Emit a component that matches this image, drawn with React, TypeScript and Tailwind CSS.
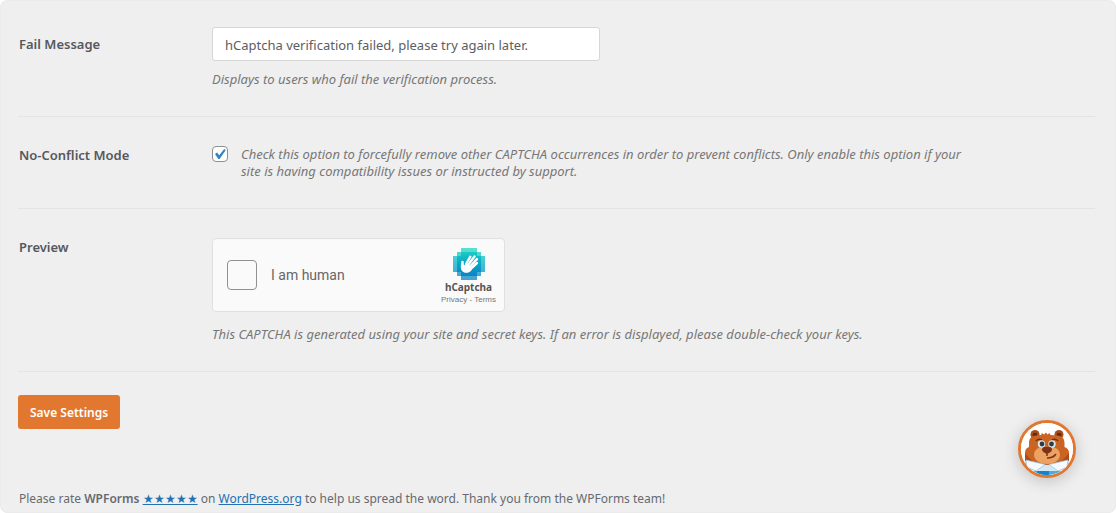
import type { ReactNode } from 'react';

const FONT = "font-['Noto_Sans','Open_Sans',sans-serif]";

function SettingRow({ label, htmlFor, children }: { label: string; htmlFor?: string; children: ReactNode }) {
  return (
    <div className="group flex border-b border-[#e4e4e4] pt-[29px] pb-7 first:pt-[27px]">
      <div className="w-[194px] shrink-0 pl-px text-[13px] leading-[18px] font-semibold text-[#55585e] group-first:pt-2">
        {htmlFor ? <label htmlFor={htmlFor}>{label}</label> : <span>{label}</span>}
      </div>
      <div className="min-w-0 flex-1">{children}</div>
    </div>
  );
}

function HCaptchaLogo() {
  return (
    <svg className="h-8 w-8" viewBox="0 0 32 32" aria-hidden="true">
      <defs>
        <linearGradient id="hc" x1="0" y1="0" x2="0" y2="1">
          <stop offset="0" stopColor="#3ddcc8" />
          <stop offset="0.5" stopColor="#1fb8cb" />
          <stop offset="1" stopColor="#2a8fcc" />
        </linearGradient>
        <linearGradient id="hc-core" x1="0" y1="0" x2="0" y2="1">
          <stop offset="0" stopColor="#1ccbc4" />
          <stop offset="0.5" stopColor="#08a5c8" />
          <stop offset="1" stopColor="#0d83c4" />
        </linearGradient>
      </defs>
      <path d="M8 0h16v4h4v4h4v16h-4v4h-4v4H8v-4H4v-4H0V8h4V4h4z" fill="url(#hc)" opacity="0.85" />
      <path d="M8 4h16v4h4v16h-4v4H8v-4H4V8h4z" fill="url(#hc-core)" />
      <g stroke="#fff" strokeLinecap="round" strokeWidth="2.4">
        <path d="M13 16L17.300 8.700" />
        <path d="M15 17L21.500 8.500" />
        <path d="M17 18.500L24 11.200" />
        <path d="M18 20.500L24 15" />
        <path d="M9.800 19L9.500 14" />
      </g>
      <path d="M8.300 15l3 2.500 2-3 6 5c0 2-1 3-2 4-2 1.700-5 1.700-7 .5-2.500-1.500-3-5-2-9z" fill="#fff" />
    </svg>
  );
}

function Bear() {
  return (
    <svg className="h-full w-full" viewBox="0 0 52 52" aria-hidden="true">
      <rect width="52" height="52" fill="#fff" />
      <circle cx="14" cy="11.500" r="4.500" fill="#a64d1c" />
      <circle cx="14" cy="12" r="2.300" fill="#5d2a16" />
      <circle cx="38" cy="11.500" r="4.500" fill="#a64d1c" />
      <circle cx="38" cy="12" r="2.300" fill="#5d2a16" />
      <path
        d="M8 20c0-5 3-7 7-7.500l5-.5 1-2 2 1.500 2-2 1.500 2 2-1.500 1 2 7 .5c4 .5 7 2.500 7 7.500v4c3 1 4.500 3 4.500 6v12H4V30c0-3 1-5 4-6z"
        fill="#cb6423"
      />
      <path d="M4 30c3 4 7 8 12 11H4zM48 30c-3 4-7 8-12 11h12z" fill="#a94b1b" />
      <path d="M13 32c0-6 6-9 13-9s13 3 13 9c0 5-6 9-13 9s-13-4-13-9z" fill="#eba262" />
      <path d="M15 18c1-2 4-2 6-1M31 17c2-1 5-1 6 1" fill="none" stroke="#6b2f17" strokeWidth="1.500" />
      <circle cx="20.500" cy="21" r="3.700" fill="#d8e9ef" />
      <circle cx="31" cy="21" r="3.700" fill="#d8e9ef" />
      <circle cx="21" cy="21" r="2.400" fill="#2d3c45" />
      <circle cx="30.500" cy="21" r="2.400" fill="#2d3c45" />
      <path d="M21 26.500c0-2 2-3 5-3s5 1 5 3-3 4-5 4-5-2-5-4z" fill="#7c3218" />
      <path d="M26 30v3M26 35c4 0 7-1 9-4" fill="none" stroke="#7c3218" strokeWidth="1.500" />
      <path d="M0 38h7c5 3 12 4 19 4s14-1 19-4h7v14H0z" fill="#d4e9f5" />
      <path d="M5 37l19 4.500-9 6.500-9-4zM47 37l-19 4.500 9 6.500 9-4z" fill="#f5fbfe" stroke="#9fc9df" strokeWidth="0.800" />
      <path d="M8 48h32v4H8z" fill="#45afe0" />
      <path d="M16 48h12v4H16z" fill="#1981c4" />
    </svg>
  );
}

function App() {
  return (
    <div className="min-h-screen bg-white">
      <main
        className={`relative min-h-screen rounded-lg bg-[#efefef] pr-[21px] pl-[18px] text-[13px] text-[#666a70] ring-1 ring-[#ebebeb] ring-inset ${FONT}`}
      >
        <form onSubmit={(e) => e.preventDefault()}>
          <div>
            <SettingRow label="Fail Message" htmlFor="fail-message">
              <input
                id="fail-message"
                type="text"
                defaultValue="hCaptcha verification failed, please try again later."
                className="block h-[34px] w-full max-w-[388px] rounded-[3px] border border-[#d6d6d6] bg-white px-3 pt-px text-[13px] text-[#5a5e63]"
              />
              <p className="mt-[10px] leading-[17px] text-[#777] italic">
                Displays to users who fail the verification process.
              </p>
            </SettingRow>

            <SettingRow label="No-Conflict Mode" htmlFor="no-conflict">
              <div className="flex gap-[13px]">
                <span className="relative h-4 w-4 shrink-0">
                  <input
                    id="no-conflict"
                    type="checkbox"
                    defaultChecked
                    aria-describedby="no-conflict-help"
                    className="peer block h-4 w-4 appearance-none rounded-[4px] border border-[#8c8f94] bg-white"
                  />
                  <svg
                    className="pointer-events-none absolute inset-0 hidden h-4 w-4 peer-checked:block"
                    viewBox="0 0 16 16"
                    aria-hidden="true"
                  >
                    <path d="M3 8l2-1.400 2.200 2.600 5-6.200 1.600 1-6.200 9h-1.300z" fill="#3582c4" />
                  </svg>
                </span>
                <p id="no-conflict-help" className="max-w-[740px] leading-[17px] text-[#777] italic">
                  Check this option to forcefully remove other CAPTCHA occurrences in order to prevent conflicts. Only enable this option if your site is having compatibility issues or instructed by support.
                </p>
              </div>
            </SettingRow>

            <SettingRow label="Preview">
              <div className="flex h-[74px] max-w-[293px] items-center rounded border border-[#e0e0e0] bg-[#fafafa] pr-2 pl-[14px]">
                <input
                  id="human"
                  type="checkbox"
                  className="h-[30px] w-[30px] appearance-none rounded border border-[#919191] bg-[#fafafa]"
                />
                <label htmlFor="human" className="ml-[14px] font-['Roboto',sans-serif] text-sm text-[#666]">
                  I am human
                </label>
                <div className="ml-auto flex flex-col items-center pt-1">
                  <HCaptchaLogo />
                  <span className="text-[10px] leading-[14px] font-bold text-[#555]">hCaptcha</span>
                  <span className="font-['Liberation_Sans',sans-serif] text-[8px] leading-3 text-[#777]">
                    <a href="#privacy">Privacy</a> - <a href="#terms">Terms</a>
                  </span>
                </div>
              </div>
              <p className="mt-[14px] leading-[17px] text-[#777] italic">
                This CAPTCHA is generated using your site and secret keys. If an error is displayed, please double-check your keys.
              </p>
            </SettingRow>
          </div>

          <button
            type="submit"
            className="mt-[23px] block h-[34px] rounded-[3px] bg-[#e27730] px-3 pt-[2px] text-[12px] font-semibold text-white"
          >
            Save Settings
          </button>
        </form>

        <footer className="pt-[61px] pb-1 pl-px text-[12px] leading-[17px]">
          Please rate <strong className="font-semibold">WPForms</strong>{' '}
          <a href="#rate" className="text-[#2271b1] underline">★★★★★</a> on{' '}
          <a href="#wordpress" className="text-[#2271b1] underline">WordPress.org</a> to help us spread the word. Thank you from the WPForms team!
        </footer>

        <button
          type="button"
          aria-label="Quick links"
          className="absolute right-10 bottom-[35px] h-[58px] w-[58px] overflow-hidden rounded-full border-[3px] border-[#e27730] bg-white shadow-[0_3px_16px_rgba(0,0,0,0.2)]"
        >
          <Bear />
        </button>
      </main>
    </div>
  );
}

export default App;
